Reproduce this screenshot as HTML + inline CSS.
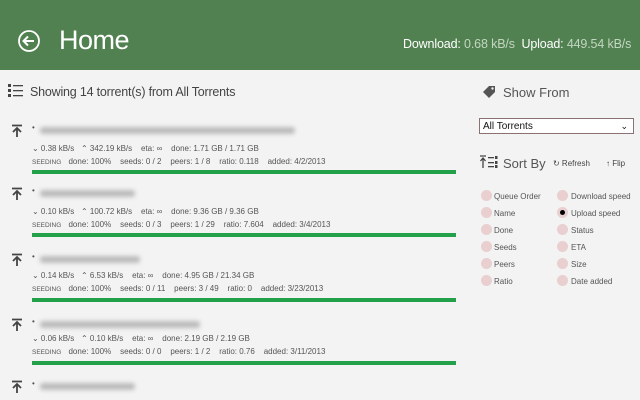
<!DOCTYPE html>
<html><head><style>
body{margin:0;width:640px;height:400px;overflow:hidden;background:#f3f3f3;font-family:"Liberation Sans",sans-serif;position:relative;color:#333}
.hdr{position:absolute;left:0;top:0;width:640px;height:70px;background:#518150}
.abs{position:absolute;white-space:nowrap}
.bl{position:absolute;height:7px;background:#bbb;filter:blur(2px);border-radius:3px}
.s1{font-size:8px;color:#555}
.s2{font-size:6.5px;color:#555}
.bar{position:absolute;left:32px;width:424px;height:4px;background:#23a04a}
.rad{position:absolute;width:11px;height:11px;border-radius:50%;background:#e9cfd0}
.rl{position:absolute;font-size:8px;color:#555}
</style></head><body>
<div class="hdr"></div>
<svg class="abs" style="left:17px;top:29px" width="24" height="24" viewBox="0 0 24 24"><circle cx="12" cy="12" r="10" fill="none" stroke="#fff" stroke-width="1.8"/><path d="M17 12H7M11 7.5L6.5 12 11 16.5" fill="none" stroke="#fff" stroke-width="2"/></svg>
<div class="abs" style="left:59px;top:25px;font-size:27px;color:#fff;letter-spacing:-0.5px">Home</div>
<div class="abs" style="left:403px;top:37px;font-size:12.5px;color:#fff;letter-spacing:-0.15px">Download: <span style="color:#c3d6c2">0.68 kB/s</span>&nbsp; Upload: <span style="color:#c3d6c2">449.54 kB/s</span></div>

<svg class="abs" style="left:8px;top:84px" width="16" height="14"><g fill="#444"><rect x="0" y="0" width="3" height="3"/><rect x="0" y="5" width="3" height="3"/><rect x="0" y="10" width="3" height="3"/><rect x="5" y="1" width="10" height="1.3"/><rect x="5" y="6" width="10" height="1.3"/><rect x="5" y="11" width="10" height="1.3"/></g></svg>
<div class="abs" style="left:30px;top:85px;font-size:12.5px;color:#444;letter-spacing:-0.2px">Showing 14 torrent(s) from All Torrents</div>

<svg class="abs" style="left:11px;top:124px" width="12" height="14"><path d="M1 1.5h10M6 13V4.5M2 8l4-4 4 4" fill="none" stroke="#444" stroke-width="1.8"/></svg>
<div class="abs s1" style="left:32px;top:123px">•</div><div class="bl" style="left:40px;top:127px;width:255px"></div>
<div class="abs s1" style="left:32px;top:144px">⌄ 0.38 kB/s &nbsp;&nbsp;⌃ 342.19 kB/s &nbsp;&nbsp;&nbsp;eta: ∞ &nbsp;&nbsp;&nbsp;done: 1.71 GB / 1.71 GB</div>
<div class="abs s2" style="left:32px;top:157px">SEEDING &nbsp;&nbsp;&nbsp;<span style="font-size:8px">done: 100% &nbsp;&nbsp;&nbsp;seeds: 0 / 2 &nbsp;&nbsp;&nbsp;peers: 1 / 8 &nbsp;&nbsp;&nbsp;ratio: 0.118 &nbsp;&nbsp;&nbsp;added: 4/2/2013</span></div>
<div class="bar" style="top:170px"></div>

<svg class="abs" style="left:11px;top:187px" width="12" height="14"><path d="M1 1.5h10M6 13V4.5M2 8l4-4 4 4" fill="none" stroke="#444" stroke-width="1.8"/></svg>
<div class="abs s1" style="left:32px;top:186px">•</div><div class="bl" style="left:40px;top:190px;width:95px"></div>
<div class="abs s1" style="left:32px;top:207px">⌄ 0.10 kB/s &nbsp;&nbsp;⌃ 100.72 kB/s &nbsp;&nbsp;&nbsp;eta: ∞ &nbsp;&nbsp;&nbsp;done: 9.36 GB / 9.36 GB</div>
<div class="abs s2" style="left:32px;top:220px">SEEDING &nbsp;&nbsp;&nbsp;<span style="font-size:8px">done: 100% &nbsp;&nbsp;&nbsp;seeds: 0 / 3 &nbsp;&nbsp;&nbsp;peers: 1 / 29 &nbsp;&nbsp;&nbsp;ratio: 7.604 &nbsp;&nbsp;&nbsp;added: 3/4/2013</span></div>
<div class="bar" style="top:233px"></div>

<svg class="abs" style="left:11px;top:253px" width="12" height="14"><path d="M1 1.5h10M6 13V4.5M2 8l4-4 4 4" fill="none" stroke="#444" stroke-width="1.8"/></svg>
<div class="abs s1" style="left:32px;top:252px">•</div><div class="bl" style="left:40px;top:256px;width:100px"></div>
<div class="abs s1" style="left:32px;top:271px">⌄ 0.14 kB/s &nbsp;&nbsp;⌃ 6.53 kB/s &nbsp;&nbsp;&nbsp;eta: ∞ &nbsp;&nbsp;&nbsp;done: 4.95 GB / 21.34 GB</div>
<div class="abs s2" style="left:32px;top:284px">SEEDING &nbsp;&nbsp;&nbsp;<span style="font-size:8px">done: 100% &nbsp;&nbsp;&nbsp;seeds: 0 / 11 &nbsp;&nbsp;&nbsp;peers: 3 / 49 &nbsp;&nbsp;&nbsp;ratio: 0 &nbsp;&nbsp;&nbsp;added: 3/23/2013</span></div>
<div class="bar" style="top:298px"></div>

<svg class="abs" style="left:11px;top:318px" width="12" height="14"><path d="M1 1.5h10M6 13V4.5M2 8l4-4 4 4" fill="none" stroke="#444" stroke-width="1.8"/></svg>
<div class="abs s1" style="left:32px;top:317px">•</div><div class="bl" style="left:40px;top:321px;width:160px"></div>
<div class="abs s1" style="left:32px;top:334px">⌄ 0.06 kB/s &nbsp;&nbsp;⌃ 0.10 kB/s &nbsp;&nbsp;&nbsp;eta: ∞ &nbsp;&nbsp;&nbsp;done: 2.19 GB / 2.19 GB</div>
<div class="abs s2" style="left:32px;top:347px">SEEDING &nbsp;&nbsp;&nbsp;<span style="font-size:8px">done: 100% &nbsp;&nbsp;&nbsp;seeds: 0 / 0 &nbsp;&nbsp;&nbsp;peers: 1 / 2 &nbsp;&nbsp;&nbsp;ratio: 0.76 &nbsp;&nbsp;&nbsp;added: 3/11/2013</span></div>
<div class="bar" style="top:361px"></div>

<svg class="abs" style="left:11px;top:380px" width="12" height="14"><path d="M1 1.5h10M6 13V4.5M2 8l4-4 4 4" fill="none" stroke="#444" stroke-width="1.8"/></svg>
<div class="abs s1" style="left:32px;top:379px">•</div><div class="bl" style="left:40px;top:383px;width:95px"></div>

<svg class="abs" style="left:482px;top:84px" width="16" height="14"><path d="M1 8L7 2h6v6l-6 6z" fill="#555"/><circle cx="10.5" cy="4.5" r="1.2" fill="#f3f3f3"/></svg>
<div class="abs" style="left:503px;top:85px;font-size:13px;color:#555">Show From</div>
<div class="abs" style="left:479px;top:118px;width:150px;height:14px;border:1px solid #8a7272;background:#fff;font-size:10px;color:#111;line-height:15px;padding-left:3px">All Torrents<span style="position:absolute;right:5px;top:0;font-size:9px">⌄</span></div>
<svg class="abs" style="left:480px;top:155px" width="18" height="14"><path d="M3 13V3M0.5 6L3 3l2.5 3M0 1h6" fill="none" stroke="#444" stroke-width="1.3"/><rect x="8" y="2" width="6" height="1.3" fill="#444"/><rect x="8" y="7" width="6" height="1.3" fill="#444"/><rect x="8" y="11" width="6" height="1.3" fill="#444"/><rect x="15" y="1" width="2.5" height="3" fill="#444"/><rect x="15" y="6" width="2.5" height="3" fill="#444"/><rect x="15" y="10" width="2.5" height="3" fill="#444"/></svg>
<div class="abs" style="left:503px;top:156px;font-size:13px;color:#555">Sort By</div>
<div class="abs" style="left:553px;top:159px;font-size:8px;color:#444">↻ Refresh</div>
<div class="abs" style="left:606px;top:159px;font-size:8px;color:#444">↑ Flip</div>

<div class="rad" style="left:481px;top:190px"></div><div class="rl" style="left:494px;top:192px">Queue Order</div>
<div class="rad" style="left:481px;top:207px"></div><div class="rl" style="left:494px;top:209px">Name</div>
<div class="rad" style="left:481px;top:224px"></div><div class="rl" style="left:494px;top:226px">Done</div>
<div class="rad" style="left:481px;top:241px"></div><div class="rl" style="left:494px;top:243px">Seeds</div>
<div class="rad" style="left:481px;top:258px"></div><div class="rl" style="left:494px;top:260px">Peers</div>
<div class="rad" style="left:481px;top:275px"></div><div class="rl" style="left:494px;top:277px">Ratio</div>
<div class="rad" style="left:557px;top:190px"></div><div class="rl" style="left:571px;top:192px">Download speed</div>
<div class="rad" style="left:557px;top:207px"><div style="margin:3px;width:5px;height:5px;border-radius:50%;background:#000"></div></div><div class="rl" style="left:571px;top:209px">Upload speed</div>
<div class="rad" style="left:557px;top:224px"></div><div class="rl" style="left:571px;top:226px">Status</div>
<div class="rad" style="left:557px;top:241px"></div><div class="rl" style="left:571px;top:243px">ETA</div>
<div class="rad" style="left:557px;top:258px"></div><div class="rl" style="left:571px;top:260px">Size</div>
<div class="rad" style="left:557px;top:275px"></div><div class="rl" style="left:571px;top:277px">Date added</div>
</body></html>
